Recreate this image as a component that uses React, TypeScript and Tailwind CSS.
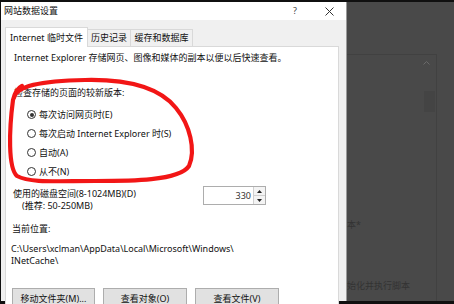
import React from 'react';

/* ------------------------------------------------------------------ */
/*  Small pieces                                                       */
/* ------------------------------------------------------------------ */

const FONT = "font-['Noto_Sans','Noto_Sans_CJK_SC',sans-serif]";

function Radio({ label, checked }: { label: string; checked?: boolean }) {
  return (
    <div className="flex items-center h-[19px] ml-[21px] gap-[3px]">
      <span className="w-[9px] h-[9px] rounded-full border border-[#333] bg-white flex items-center justify-center">
        {checked && <span className="w-[4px] h-[4px] rounded-full bg-[#333]" />}
      </span>
      <span>{label}</span>
    </div>
  );
}

function Tab({ label, active, width }: { label: string; active?: boolean; width: string }) {
  if (active) {
    return (
      <div
        className={`${width} h-[20px] bg-white border border-b-0 border-[#d9d9d9] flex items-center justify-center relative z-10 -mb-px`}
      >
        {label}
      </div>
    );
  }
  return (
    <div
      className={`${width} h-[17px] self-end border border-l-0 border-b-0 border-[#d9d9d9] flex items-center justify-center`}
    >
      {label}
    </div>
  );
}

function Button({ label, width }: { label: string; width: string }) {
  return (
    <div
      className={`${width} h-[22px] bg-[#e1e1e1] border border-[#adadad] flex items-center justify-center`}
    >
      {label}
    </div>
  );
}

/* ------------------------------------------------------------------ */
/*  App                                                                */
/* ------------------------------------------------------------------ */

export default function App() {
  return (
    <div className={`w-[454px] h-[304px] bg-[#101010] overflow-hidden relative pt-[2px] text-[9px] text-[#111] ${FONT}`}>
      <div className="flex h-[299px] pl-px">
        {/* ── Dialog ─────────────────────────────────────────── */}
        <div className="w-[345px] flex flex-col">
          {/* title bar */}
          <div className="h-[18px] bg-white flex items-center pl-[3px] pr-[12px]">
            <span>网站数据设置</span>
            <span className="ml-auto text-[#444] mr-[28px]">?</span>
            <svg width="9" height="9" viewBox="0 0 9 9">
              <path d="M0.5 0.5 L8.5 8.5 M8.5 0.5 L0.5 8.5" stroke="#333" strokeWidth="1" />
            </svg>
          </div>

          {/* body */}
          <div className="flex-1 bg-[#f0f0f0] pt-[7px] flex flex-col min-h-0">
            <div className="flex pl-[4px]">
              <Tab label="Internet 临时文件" active width="w-[83px]" />
              <Tab label="历史记录" width="w-[43px]" />
              <Tab label="缓存和数据库" width="w-[62px]" />
            </div>

            <div className="ml-[4px] w-[334px] flex-1 bg-white border border-[#d9d9d9] flex flex-col">
              <p className="ml-[8px] mt-[4px] leading-[14px] whitespace-nowrap">
                Internet Explorer 存储网页、图像和媒体的副本以便以后快速查看。
              </p>

              <p className="ml-[8px] mt-[21px] leading-[14px]">检查存储的页面的较新版本:</p>

              <div className="mt-[5px] flex flex-col">
                <Radio label="每次访问网页时(E)" checked />
                <Radio label="每次启动 Internet Explorer 时(S)" />
                <Radio label="自动(A)" />
                <Radio label="从不(N)" />
              </div>

              {/* disk space */}
              <div className="flex mt-[7px]">
                <div className="w-[190px] ml-[7px] leading-[12px]">
                  <p>使用的磁盘空间(8-1024MB)(D)</p>
                  <p className="ml-[9px]">(推荐: 50-250MB)</p>
                </div>
                <div className="-mt-[2px] w-[63px] h-[19px] border border-[#adadad] bg-white flex">
                  <span className="flex-1 flex items-center justify-end pr-[2px] text-[#333]">330</span>
                  <div className="w-[12px] flex flex-col border-l border-[#d0d0d0] bg-[#f4f4f4]">
                    <div className="flex-1 flex items-center justify-center border-b border-[#d0d0d0]">
                      <svg width="5" height="3" viewBox="0 0 5 3">
                        <path d="M0 3 L2.5 0 L5 3 Z" fill="#222" />
                      </svg>
                    </div>
                    <div className="flex-1 flex items-center justify-center">
                      <svg width="5" height="3" viewBox="0 0 5 3">
                        <path d="M0 0 L2.5 3 L5 0 Z" fill="#222" />
                      </svg>
                    </div>
                  </div>
                </div>
              </div>

              <p className="ml-[6px] mt-[10px] leading-[14px]">当前位置:</p>

              <div className="ml-[5px] mt-[7px] leading-[12px] whitespace-nowrap">
                <p>C:\Users\xclman\AppData\Local\Microsoft\Windows\</p>
                <p>INetCache\</p>
              </div>

              <div className="flex ml-[6px] mt-[21px] gap-[8px]">
                <Button label="移动文件夹(M)..." width="w-[83px]" />
                <Button label="查看对象(O)" width="w-[84px]" />
                <Button label="查看文件(V)" width="w-[84px]" />
              </div>
            </div>
          </div>
        </div>

        {/* ── Window behind ──────────────────────────────────── */}
        <div className="w-px bg-[#9a9a9a]" />
        <div className="flex-1 bg-[#494949] flex flex-col">
          <div className="mt-[52px] w-[90px] flex-1 border-t border-r border-[#414141] flex flex-col relative">
            <svg className="absolute right-[6px] top-[6px]" width="7" height="4" viewBox="0 0 7 4">
              <path d="M0.5 3.5 L3.5 0.5 L6.5 3.5" stroke="#6a6a6a" fill="none" strokeWidth="1" />
            </svg>
            <div className="absolute right-px top-[36px] w-[11px] h-[21px] bg-[#444]" />
            <p className="mt-[163px] leading-[14px] text-[#333]">本*</p>
            <p className="mt-[47px] leading-[14px] text-[#333] whitespace-nowrap">始化并执行脚本</p>
          </div>
        </div>
      </div>

      {/* ── Hand-drawn red annotation ─────────────────────── */}
      <svg className="absolute inset-0 pointer-events-none" width="454" height="304" viewBox="0 0 454 304">
        <path
          d="M14 98 C16 86, 40 81, 85 80 C130 79, 160 88, 176 108 C190 125, 196 150, 189 166 C179 181, 130 181, 95 181 C55 181, 30 183, 17 176 C8 168, 9 130, 13 100 C15 92, 18 88, 22 86"
          stroke="#f21616"
          strokeWidth="4.2"
          fill="none"
          strokeLinecap="round"
        />
      </svg>
    </div>
  );
}
